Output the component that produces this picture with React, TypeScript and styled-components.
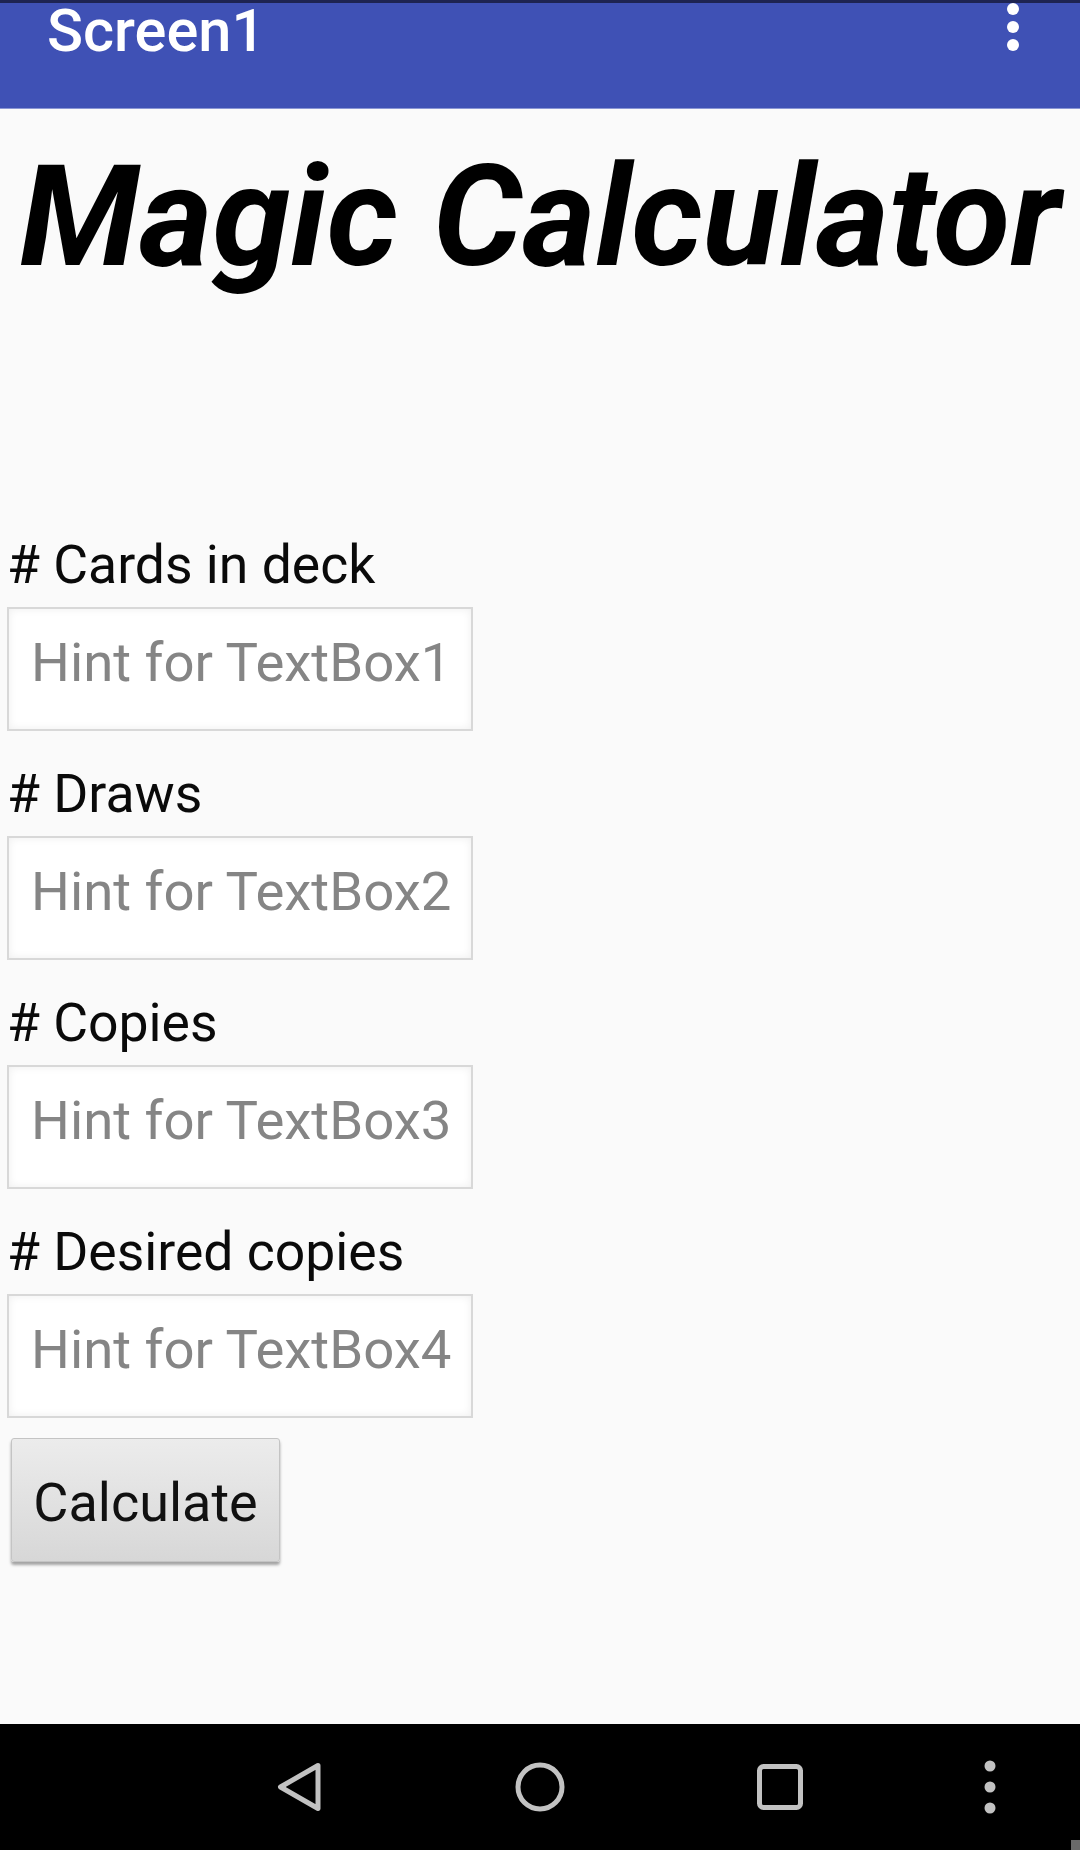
import React from "react";
import styled, { createGlobalStyle } from "styled-components";

const Global = createGlobalStyle`
  html, body { margin: 0; padding: 0; background: #fafafa; }
  body { font-family: Roboto, "Liberation Sans", sans-serif; }
  * { box-sizing: border-box; }
`;

const Screen = styled.div`
  width: 1080px;
  height: 1850px;
  display: flex;
  flex-direction: column;
  background: #fafafa;
  overflow: hidden;
`;

const AppBar = styled.header`
  height: 109px;
  flex: none;
  display: flex;
  align-items: flex-start;
  justify-content: space-between;
  background: #3f51b5;
  border-top: 3px solid #1e2452;
  border-bottom: 1px solid #8a96d4;
  padding-left: 47px;
`;

const AppTitle = styled.h1`
  margin: 0;
  font-family: Roboto, "Liberation Sans", sans-serif;
  font-weight: 500;
  font-size: 59.5px;
  line-height: 56px;
  color: #ffffff;
`;

const MenuIcon = styled.svg`
  width: 24px;
  height: 50px;
  margin-right: 55px;
  flex: none;
`;

const Content = styled.main`
  flex: 1;
  display: flex;
  flex-direction: column;
  align-items: flex-start;
  padding: 26px 7px 0 7px;
`;

const Title = styled.div`
  align-self: stretch;
  text-align: center;
  font-family: Roboto, "Liberation Sans", sans-serif;
  font-weight: 700;
  font-style: italic;
  font-size: 141px;
  line-height: 164px;
  color: #000;
  margin: 0 -7px 235px -7px;
  white-space: nowrap;
`;

const Field = styled.div`
  display: flex;
  flex-direction: column;
  align-items: flex-start;
  margin-bottom: 32px;
  &:last-of-type { margin-bottom: 20px; }
`;

const Label = styled.label`
  font-family: Roboto, "Liberation Sans", sans-serif;
  font-size: 53.5px;
  line-height: 62px;
  color: #0a0a0a;
  margin: 0 0 11px 0;
`;

const HintBox = styled.input`
  width: 466px;
  height: 124px;
  padding: 22px 0 36px 22px;
  border: 2px solid #d8d8d8;
  background: #ffffff;
  box-shadow: inset 0 0 8px rgba(0, 0, 0, 0.07);
  font-family: Roboto, "Liberation Sans", sans-serif;
  font-size: 54.5px;
  line-height: 62px;
  color: #222;
  outline: none;
  &::placeholder { color: #858585; }
`;

const CalcButton = styled.button`
  margin-left: 4px;
  width: 269px;
  height: 124px;
  padding: 6px 0 0 0;
  border: 1px solid #c4c4c4;
  border-radius: 3px;
  background: linear-gradient(#ececec, #d7d7d7);
  box-shadow: 0 3px 3px rgba(0, 0, 0, 0.35);
  font-family: Roboto, "Liberation Sans", sans-serif;
  font-size: 54px;
  line-height: 62px;
  color: #111;
`;

const NavBar = styled.nav`
  position: relative;
  height: 126px;
  flex: none;
  background: #000;
  display: flex;
  align-items: center;
  padding-left: 180px;
`;

const NavSlot = styled.div<{ $w: number }>`
  width: ${(p) => p.$w}px;
  display: flex;
  justify-content: center;
  align-items: center;
`;

const CornerMark = styled.span`
  position: absolute;
  right: 0;
  bottom: 0;
  width: 9px;
  height: 10px;
  background: #6a6a6a;
`;

const NAV = "#c2c2c2";

const fields = [
  { label: "# Cards in deck", hint: "Hint for TextBox1" },
  { label: "# Draws", hint: "Hint for TextBox2" },
  { label: "# Copies", hint: "Hint for TextBox3" },
  { label: "# Desired copies", hint: "Hint for TextBox4" },
];

export default function App() {
  return (
    <>
      <Global />
      <Screen>
        <AppBar>
          <AppTitle>Screen1</AppTitle>
          <MenuIcon viewBox="0 0 24 50">
            <circle cx="12" cy="6" r="6" fill="#fff" />
            <circle cx="12" cy="24" r="6" fill="#fff" />
            <circle cx="12" cy="42" r="6" fill="#fff" />
          </MenuIcon>
        </AppBar>
        <Content>
          <Title>Magic Calculator</Title>
          {fields.map((f) => (
            <Field key={f.label}>
              <Label>{f.label}</Label>
              <HintBox placeholder={f.hint} />
            </Field>
          ))}
          <CalcButton>Calculate</CalcButton>
        </Content>
        <NavBar>
          <NavSlot $w={240}>
            <svg width="46" height="50" viewBox="0 0 46 50">
              <path
                d="M41 3.5 L3.5 25 L41 46.5 Z"
                fill="none"
                stroke={NAV}
                strokeWidth="5"
                strokeLinejoin="round"
              />
            </svg>
          </NavSlot>
          <NavSlot $w={240}>
            <svg width="50" height="50" viewBox="0 0 50 50">
              <circle cx="25" cy="25" r="22" fill="none" stroke={NAV} strokeWidth="5" />
            </svg>
          </NavSlot>
          <NavSlot $w={240}>
            <svg width="46" height="46" viewBox="0 0 46 46">
              <rect x="2.5" y="2.5" width="41" height="41" rx="4" fill="none" stroke={NAV} strokeWidth="5" />
            </svg>
          </NavSlot>
          <NavSlot $w={180}>
            <svg width="12" height="54" viewBox="0 0 12 54">
              <circle cx="6" cy="6" r="5.5" fill={NAV} />
              <circle cx="6" cy="27" r="5.5" fill={NAV} />
              <circle cx="6" cy="48" r="5.5" fill={NAV} />
            </svg>
          </NavSlot>
          <CornerMark />
        </NavBar>
      </Screen>
    </>
  );
}
